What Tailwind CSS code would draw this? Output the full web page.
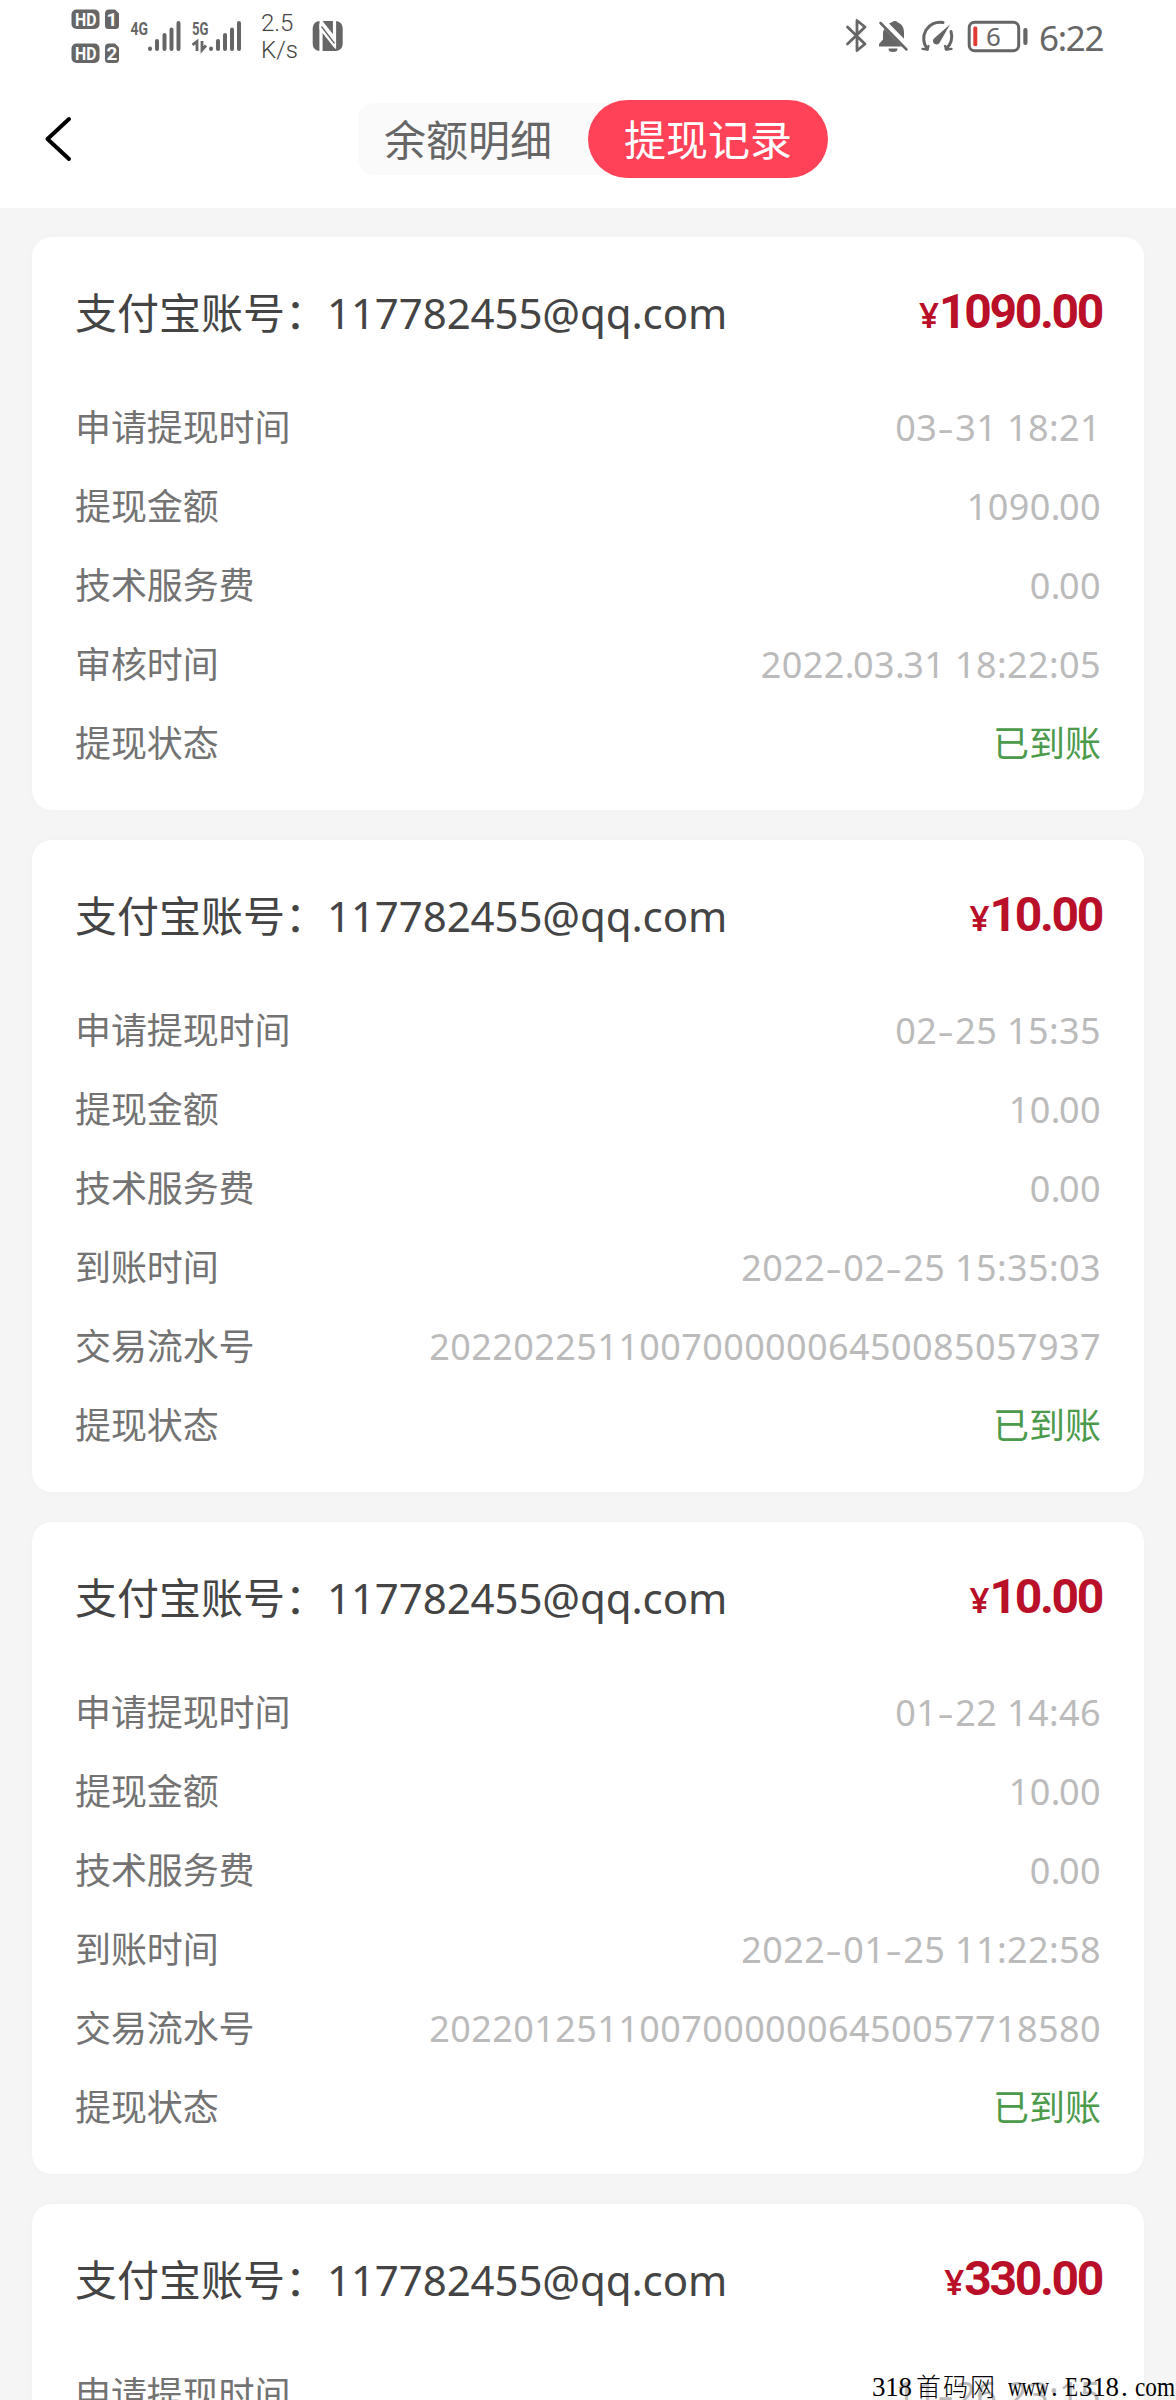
<!DOCTYPE html>
<html lang="zh-CN">
<head>
    <meta charset="UTF-8">
    <meta name="viewport" content="width=device-width, initial-scale=1.0">
    <title>提现记录</title>
    <script src="https://cdn.jsdelivr.net/npm/@tailwindcss/browser@4"></script>
</head>
<body class="bg-[#f5f5f5] font-['Noto_Sans','Noto_Sans_CJK_SC',sans-serif]">

    <div class="relative w-[1176px] h-[2400px] overflow-hidden">

        <!-- Header -->
        <header class="bg-white h-[208px]">

            <!-- Status bar -->
            <div class="h-[72px] pl-[71px] pr-[70px] flex justify-between text-[#666]">
                <div class="flex">
                    <!-- HD 1 / HD 2 -->
                    <svg class="w-[49px] h-[72px]" viewBox="71 0 49 72" fill="currentColor">
                        <rect x="71.5" y="9.5" width="28" height="19.5" rx="5"/>
                        <path d="M109 9.5h6l4 4v12a3.5 3.5 0 0 1-3.5 3.5h-7a3.5 3.5 0 0 1-3.5-3.5v-12a4 4 0 0 1 4-4z"/>
                        <rect x="71.5" y="43.5" width="28" height="19.5" rx="5"/>
                        <path d="M109 43.5h6l4 4v12a3.5 3.5 0 0 1-3.5 3.5h-7a3.5 3.5 0 0 1-3.5-3.5v-12a4 4 0 0 1 4-4z"/>
                        <g fill="#fff" font-family="Roboto" font-weight="700" font-size="19">
                            <text x="75" y="26" textLength="21.5" lengthAdjust="spacingAndGlyphs">HD</text>
                            <text x="75" y="60" textLength="21.5" lengthAdjust="spacingAndGlyphs">HD</text>
                            <text x="106.5" y="26">1</text>
                            <text x="106.5" y="60">2</text>
                        </g>
                    </svg>
                    <!-- 4G signal -->
                    <svg class="ml-[10px] w-[52px] h-[72px]" viewBox="130 0 52 72" fill="none" stroke="currentColor" stroke-width="4" stroke-linecap="round">
                        <text x="130.5" y="34.5" fill="currentColor" stroke="none" font-family="Roboto" font-weight="700" font-size="18" textLength="17.5" lengthAdjust="spacingAndGlyphs">4G</text>
                        <path d="M150 48.5v.5M157 41v8M164.500 35v14M171.500 29.5v19.5M178.500 23v26"/>
                    </svg>
                    <!-- 5G signal -->
                    <svg class="ml-[10px] w-[52px] h-[72px]" viewBox="192 0 52 72" fill="none" stroke="currentColor" stroke-width="4" stroke-linecap="round">
                        <text x="192" y="34.5" fill="currentColor" stroke="none" font-family="Roboto" font-weight="700" font-size="18" textLength="16.5" lengthAdjust="spacingAndGlyphs">5G</text>
                        <path d="M211 48.5v.5M218 41v8M225 35v14M232 29.5v19.5M239 23v26"/>
                        <path d="M192.500 45l4.500-3.500v9.500M202 41v9l4-4.500" stroke-width="2.800" stroke-linecap="butt"/>
                    </svg>
                    <!-- Network speed -->
                    <div class="ml-[17px] w-[36px] pt-[10px] font-['Roboto'] font-light text-[24px] leading-[27px] text-[#444]">
                        <div>2.5</div>
                        <div>K/s</div>
                    </div>
                    <!-- NFC -->
                    <svg class="ml-[15px] w-[32px] h-[72px]" viewBox="312 0 32 72">
                        <rect x="312.7" y="21" width="30" height="30" rx="7" fill="currentColor"/>
                        <path d="M321 51V28l13.500 17V21" fill="none" stroke="#fff" stroke-width="3.200"/>
                        <path d="M319.500 21h3l13.500 17v7l-1.500 3-15-19z" fill="#fff"/>
                        <path d="M321.500 26.500l13 17" fill="none" stroke="currentColor" stroke-width="1.300"/>
                    </svg>
                </div>

                <div class="flex">
                    <!-- Bluetooth -->
                    <svg class="w-[24px] h-[72px]" viewBox="844 0 24 72" fill="none" stroke="currentColor" stroke-width="2.800" stroke-linejoin="round" stroke-linecap="round">
                        <path d="M847.500 27l17.500 17-8 6.500v-30l8 6.500-17.500 17"/>
                    </svg>
                    <!-- Muted bell -->
                    <svg class="ml-[9px] w-[32px] h-[72px]" viewBox="877 0 32 72" fill="currentColor">
                        <path d="M889 23.500c1-.6 2-1 3-1.300a3.300 2.500 0 0 1 5.500 0c4 1.500 6.500 5 6.500 10v6.500z"/>
                        <path d="M884.500 29l17.500 17.500h-23v-2.500l4-4.500v-6c0-2 .5-3.500 1.500-4.500z"/>
                        <path d="M888.500 48.500h9a4.500 3.500 0 0 1-9 0z"/>
                        <path d="M880.500 23l26 26.500" stroke="currentColor" stroke-width="2.500" stroke-linecap="round"/>
                    </svg>
                    <!-- Speed gauge -->
                    <svg class="ml-[9px] w-[38px] h-[72px]" viewBox="918 0 38 72" fill="none" stroke="currentColor" stroke-width="3" stroke-linecap="round">
                        <path d="M927.500 49a16.300 16.300 0 0 1 15.500-26.500M951 31.500a16.300 16.300 0 0 1-5 17.500"/>
                        <path d="M922.500 48.800l5 .7 1-3.500M951.500 48.800l-5 .7-1.500-3.500" stroke-width="2.300" stroke-linejoin="round"/>
                        <path d="M950 24.500l-10 17.500a3.600 3.600 0 1 1-5.500-4z" fill="currentColor" stroke="none"/>
                    </svg>
                    <!-- Battery -->
                    <svg class="ml-[11px] w-[62px] h-[72px]" viewBox="967 0 62 72">
                        <rect x="969.2" y="22.2" width="49.5" height="28.5" rx="5.5" fill="none" stroke="currentColor" stroke-width="3"/>
                        <rect x="973.3" y="26.5" width="4" height="19.5" rx="1.5" fill="#e03a35"/>
                        <rect x="1023.3" y="28" width="4.2" height="17" rx="2" fill="currentColor"/>
                        <text x="986" y="46" font-family="Noto Sans" font-size="26" fill="currentColor">6</text>
                    </svg>
                    <div class="ml-[10px] w-[67px] pt-[14px] text-[35px] leading-[48px] tracking-[-1.3px] whitespace-nowrap">6:22</div>
                </div>
            </div>

            <!-- Title tabs -->
            <div class="h-[136px] flex items-start">
                <button class="ml-[42px] mt-[42px]">
                    <svg class="block w-[34px] h-[50px]" viewBox="0 0 34 50" fill="none" stroke="#000" stroke-width="4" stroke-linecap="round" stroke-linejoin="round">
                        <path d="M27 5L5.500 25 27 45"/>
                    </svg>
                </button>
                <div class="ml-[282px] mt-[28px] flex items-center text-[42px] leading-none">
                    <button class="h-[72px] pt-[2px] pl-[26px] w-[260px] -mr-[30px] rounded-l-2xl bg-[#fafafa] text-left text-[#666]">余额明细</button>
                    <button class="relative h-[78px] pt-[2px] w-[240px] rounded-full bg-[#ff4258] text-white">提现记录</button>
                </div>
            </div>
        </header>

        <!-- Records -->
        <main id="records" class="px-8 pt-[29px] flex flex-col gap-[30px]"></main>

        <!-- Site mark -->
        <svg class="absolute right-0 bottom-0 w-[316px] h-[40px]" viewBox="860 2360 316 40" font-family="Liberation Serif" font-size="27" fill="#000">
            <text x="872" y="2396" textLength="40" lengthAdjust="spacing">318</text>
            <text x="916" y="2396" font-family="Noto Sans CJK SC" font-weight="300" font-size="25" textLength="79" lengthAdjust="spacing">首码网</text>
            <text x="1008" y="2396" textLength="41" lengthAdjust="spacingAndGlyphs">www</text>
            <text x="1051" y="2396">.</text>
            <text x="1065" y="2396" textLength="13" lengthAdjust="spacingAndGlyphs">E</text>
            <text x="1079" y="2396" textLength="40" lengthAdjust="spacing">318</text>
            <text x="1121" y="2396">.</text>
            <text x="1135" y="2396" textLength="40" lengthAdjust="spacingAndGlyphs">com</text>
        </svg>
    </div>

    <script>
        const account = "117782455@qq.com";

        const records = [
            {
                amount: "1090.00",
                rows: [
                    ["申请提现时间", "03-31 18:21"],
                    ["提现金额", "1090.00"],
                    ["技术服务费", "0.00"],
                    ["审核时间", "2022.03.31 18:22:05"],
                    ["提现状态", "已到账"],
                ],
            },
            {
                amount: "10.00",
                rows: [
                    ["申请提现时间", "02-25 15:35"],
                    ["提现金额", "10.00"],
                    ["技术服务费", "0.00"],
                    ["到账时间", "2022-02-25 15:35:03"],
                    ["交易流水号", "20220225110070000006450085057937"],
                    ["提现状态", "已到账"],
                ],
            },
            {
                amount: "10.00",
                rows: [
                    ["申请提现时间", "01-22 14:46"],
                    ["提现金额", "10.00"],
                    ["技术服务费", "0.00"],
                    ["到账时间", "2022-01-25 11:22:58"],
                    ["交易流水号", "20220125110070000006450057718580"],
                    ["提现状态", "已到账"],
                ],
            },
            {
                amount: "330.00",
                rows: [["申请提现时间", "11-26 23:15"]],
            },
        ];

        // Wider dashes and tighter dots inside dates and amounts
        function spaced(value) {
            return value
                .replace(/\./g, `<span class="tracking-[-1.400px]">.</span>`)
                .replace(/(\d)-/g, `$1<span class="inline-block w-[18px] text-center scale-x-140">-</span>`);
        }

        // The status value is green, every other value is light gray
        function rowHtml([label, value]) {
            const color = label === "提现状态" ? "text-[#4c9a4c]" : "text-[#bbb] tracking-[0.4px]";
            return `
                <div class="h-[79px] pt-[2px] flex items-center justify-between text-[36px] leading-none">
                    <span class="text-[#737373] tracking-[-0.1px]">${label}</span>
                    <span class="${color}">${spaced(value)}</span>
                </div>`;
        }

        document.getElementById("records").innerHTML = records.map(record => `
            <section class="bg-white rounded-[20px] px-[43px] pb-7 shadow-[0_0_8px_rgba(0,0,0,0.02)]">
                <div class="h-[150px] flex items-center justify-between leading-none">
                    <h2 class="pt-[2px] text-[42px] text-[#444]">支付宝账号：<span class="tracking-[-0.1px]">${account}</span></h2>
                    <p class="-mr-px flex items-baseline text-[#b90f28]">
                        <span class="text-[35px] font-semibold">¥</span>
                        <span class="font-['Roboto'] font-bold text-[48px] tracking-[-2.3px]">${record.amount}</span>
                    </p>
                </div>
                ${record.rows.map(rowHtml).join("")}
            </section>`).join("");
    </script>

</body>
</html>
